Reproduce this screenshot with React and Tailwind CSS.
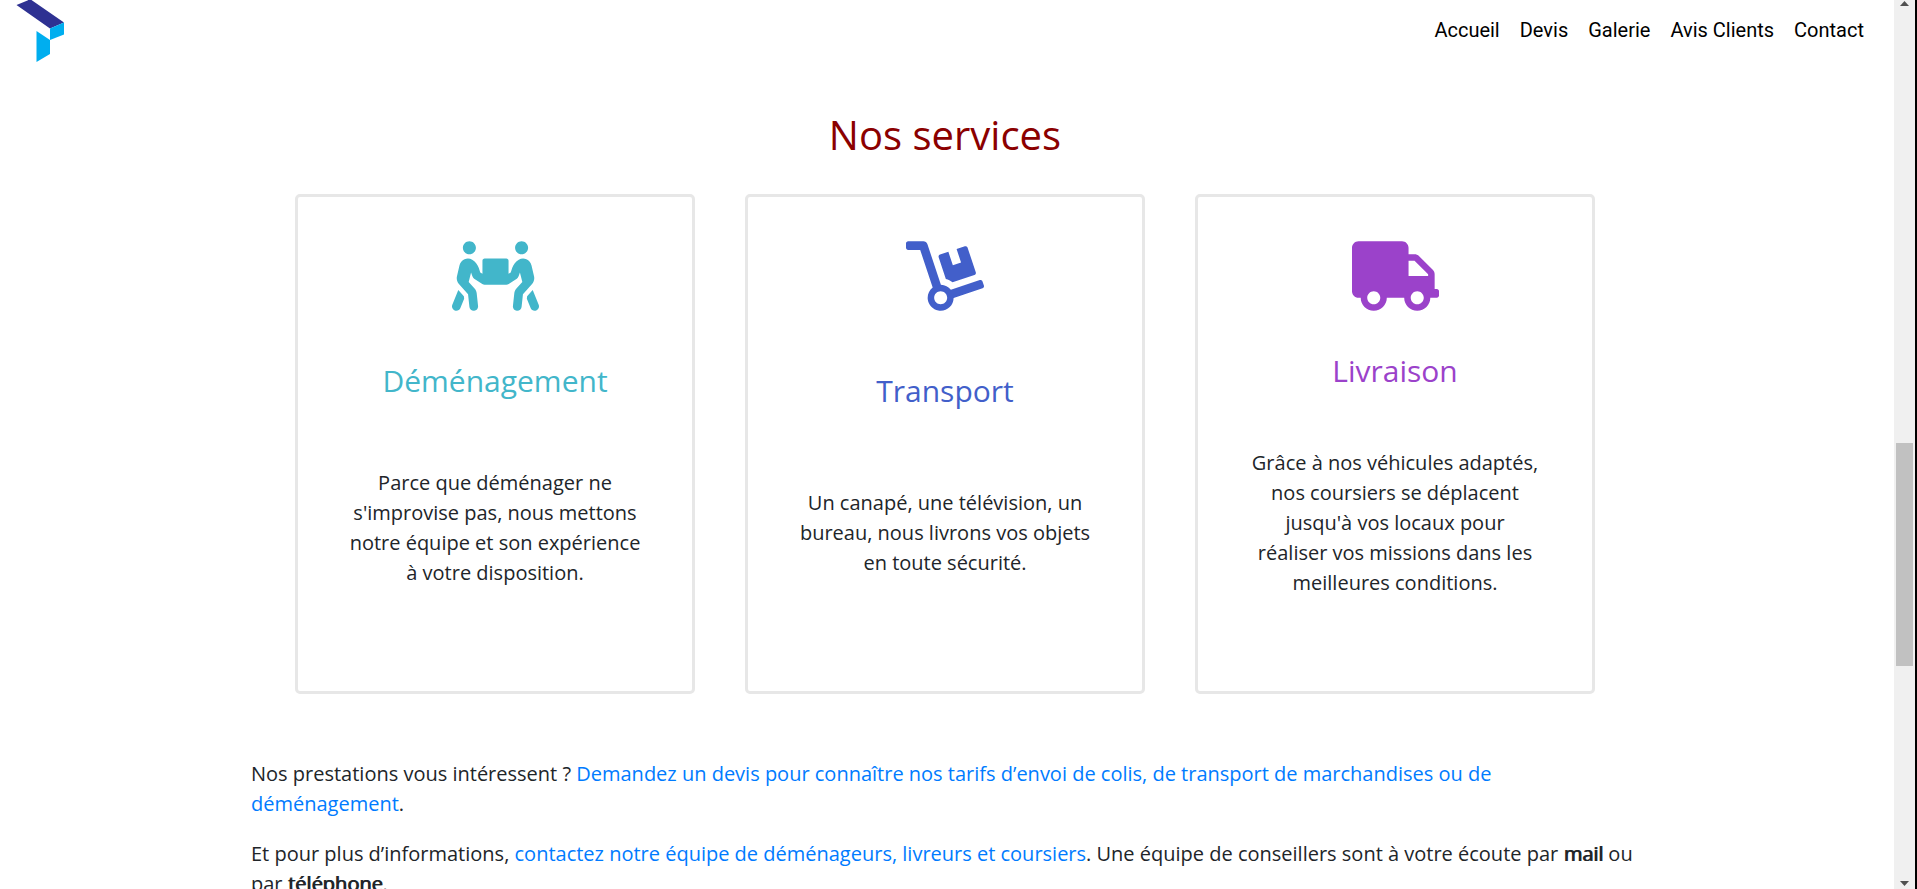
import { FaDolly, FaPeopleCarry, FaTruck } from "react-icons/fa";

const links = ["Accueil", "Devis", "Galerie", "Avis Clients", "Contact"];

const services = [
  {
    title: "Déménagement",
    Icon: FaPeopleCarry,
    iconWidth: "w-[87px]",
    color: "text-[#42b6ca]",
    text: "Parce que déménager ne s'improvise pas, nous mettons notre équipe et son expérience à votre disposition.",
  },
  {
    title: "Transport",
    Icon: FaDolly,
    iconWidth: "w-[78px]",
    color: "text-[#425fca]",
    text: "Un canapé, une télévision, un bureau, nous livrons vos objets en toute sécurité.",
  },
  {
    title: "Livraison",
    Icon: FaTruck,
    iconWidth: "w-[87px]",
    color: "text-[#9b42ca]",
    text: "Grâce à nos véhicules adaptés, nos coursiers se déplacent jusqu'à vos locaux pour réaliser vos missions dans les meilleures conditions.",
  },
];

function Logo() {
  return (
    <svg viewBox="0 0 48 64" className="h-16 w-12" aria-hidden="true">
      <path d="M0.5 5 11.5 0.5 14 -1 48 22.5 34 28.5Z" fill="#2e3192" />
      <path d="M34 28.5 48 22.5V34.5L34 40Z" fill="#00aeef" />
      <path d="M20.5 31 34 40V54L20.5 62Z" fill="#00aeef" />
    </svg>
  );
}

function Header() {
  return (
    <header className="flex items-start justify-between pl-4 pr-[30px]">
      <a href="#accueil" aria-label="Accueil">
        <Logo />
      </a>
      <nav className="flex gap-5 pt-[15px] font-[Roboto,sans-serif] text-xl leading-[30px] text-black">
        {links.map((link) => (
          <a key={link} href="#">
            {link}
          </a>
        ))}
      </nav>
    </header>
  );
}

function ServiceCard({ title, Icon, iconWidth, color, text }) {
  return (
    <article className="flex min-h-[500px] max-w-[400px] flex-1 flex-col items-center justify-between rounded-[5px] border-[3px] border-[#e7e7e7] px-[51px] pb-[52px] pt-[44px] text-center after:content-['']">
      <Icon className={`h-[70px] ${iconWidth} ${color}`} aria-hidden="true" />
      <h3 className={`mb-4 text-3xl leading-[38px] ${color}`}>{title}</h3>
      <p>{text}</p>
    </article>
  );
}

function Scrollbar() {
  return (
    <div className="flex w-[23px] shrink-0 flex-col items-center border-r-2 border-black bg-[#f0f0f0]" aria-hidden="true">
      <svg viewBox="0 0 9 5" className="mt-px h-[5px] w-[9px]">
        <path d="M4.5 0 9 5H0Z" fill="#505050" />
      </svg>
      <div className="grow-[437]" />
      <div className="w-[17px] grow-[223] bg-[#c1c1c1]" />
      <div className="grow-[215]" />
      <svg viewBox="0 0 9 5" className="mb-[3px] h-[5px] w-[9px]">
        <path d="M0 0H9L4.5 5Z" fill="#505050" />
      </svg>
    </div>
  );
}

export default function App() {
  return (
    <div className="flex h-screen overflow-hidden bg-white font-['Open_Sans',sans-serif] text-xl leading-[30px] text-[#212529]">
      <div className="min-w-0 flex-1 overflow-hidden">
        <Header />
        <main className="mx-auto max-w-[1392px] pr-1">
          <h2 className="pt-[47px] text-center text-[40px] leading-12 text-[#8b0000]">Nos services</h2>
          <section className="mt-[35px] flex justify-center gap-[50px]">
            {services.map((service) => (
              <ServiceCard key={service.title} {...service} />
            ))}
          </section>
          <section className="mt-[65px] space-y-5">
            <p>
              Nos prestations vous intéressent ?{" "}
              <a href="#devis" className="text-[#007bff]">
                Demandez un devis pour connaître nos tarifs d’envoi de colis, de transport de marchandises ou de
                déménagement
              </a>
              .
            </p>
            <p>
              Et pour plus d’informations,{" "}
              <a href="#contact" className="text-[#007bff]">
                contactez notre équipe de déménageurs, livreurs et coursiers
              </a>
              . Une équipe de conseillers sont à votre écoute par{" "}
              <strong className="font-normal [text-shadow:1px_0_currentColor]">mail</strong> ou par{" "}
              <strong className="font-normal [text-shadow:1px_0_currentColor]">téléphone</strong>.
            </p>
          </section>
        </main>
      </div>
      <Scrollbar />
    </div>
  );
}
